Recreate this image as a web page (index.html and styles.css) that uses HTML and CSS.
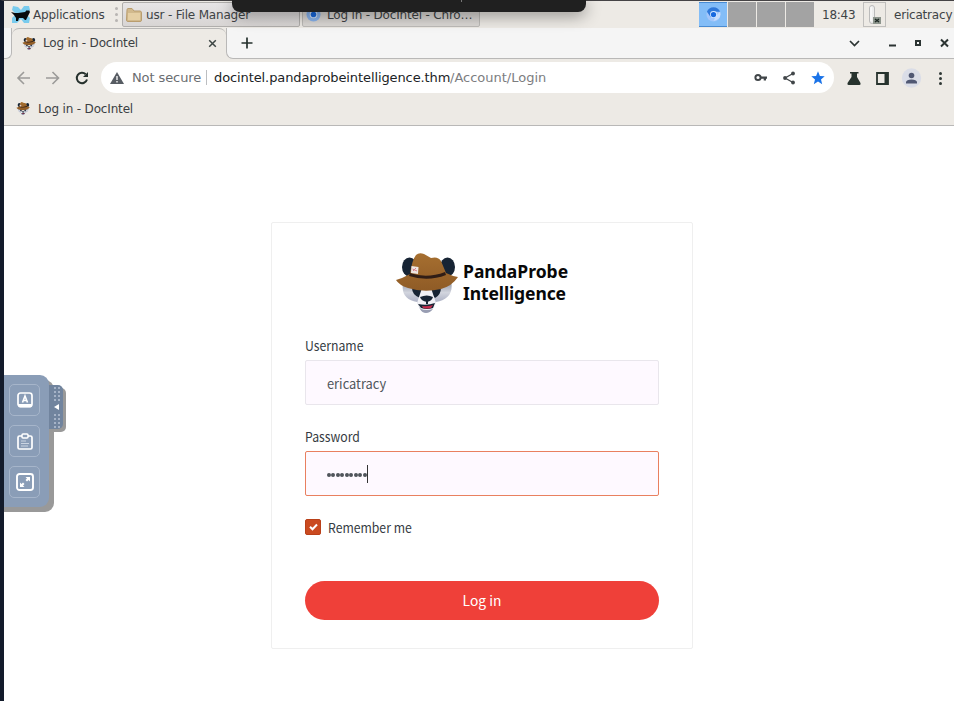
FILE: index.html
```html
<!DOCTYPE html>
<html lang="en">
<head>
<meta charset="utf-8">
<title>Log in - DocIntel</title>
<link rel="stylesheet" href="styles.css">
</head>
<body>
<svg class="defs" width="0" height="0" aria-hidden="true">
  <defs>
    <linearGradient id="face" x1="0" y1="0" x2="0" y2="1"><stop offset="0" stop-color="#858b9c"/><stop offset=".4" stop-color="#d2d5de"/><stop offset=".6" stop-color="#b9bdcd"/><stop offset="1" stop-color="#9095af"/></linearGradient>
    <linearGradient id="felt" x1="0" y1="0" x2="0" y2="1"><stop offset="0" stop-color="#a66f30"/><stop offset="1" stop-color="#8f5b26"/></linearGradient>
    <symbol id="panda" viewBox="0 0 63 60">
      <ellipse cx="14.500" cy="14" rx="7.500" ry="9.500" fill="#172434"/>
      <ellipse cx="52.500" cy="14" rx="7.500" ry="9.500" fill="#172434"/>
      <path d="M8 29C6 42 12 47 22 49L25 56Q31 61 37 56L41 49C52 47 59 41 56 27Z" fill="url(#face)"/>
      <path d="M17 35L28 34Q29 42 25 45Q17 42 17 35ZM36 34L46 34Q46 42 40 45Q36 42 36 34Z" fill="#172434"/>
      <path d="M27 35H36L41 50Q39 58 32 58Q25 58 22 50Z" fill="#f1f1f6"/>
      <path d="M25 44Q32 41 38 44Q37 48 32 49Q26 48 25 44ZM31 48H33V51H31ZM23 51Q32 53 40 50L38 55Q32 57 26 55Z" fill="#172434"/>
      <path d="M27 53Q32 54 38 52L36 55Q32 56 28 55Z" fill="#c72b4d"/>
      <path d="M25 56Q32 58 38 56Q35 60 31 60Q27 60 25 56Z" fill="#989db2"/>
      <path d="M1 27Q8 25 15 21Q17 7 21 2Q24 -1 29 1L36 5Q43 3 46 8L51 20Q57 23 63 24Q57 33 46 36Q29 40 13 35Q4 32 1 27Z" fill="url(#felt)"/>
      <path d="M15 20Q32 26 50 19L51 22Q33 29 14 23Z" fill="#301d16"/>
      <path d="M16.500 13L23.500 14L23 21L16 20Z" fill="#eee6e3"/><path d="M17.500 16L22 18M18 18L21 15" stroke="#d9828b" stroke-width="1"/>
    </symbol>
  </defs>
</svg>
<div class="desktop">
  <header class="taskbar">
    <svg class="mouse" width="20" height="18" viewBox="0 0 20 18"><path d="M2 0L7 1L10 4L13 0L18 0L19 4L15 8L19 12L18 17L13 17L10 13L6 17L1 17L1 12L5 8L1 4Z" fill="#79cbed"/><path d="M0 6L4 7L7 7L14 6L16 4L17 5L18 4L19 6L17 10L16 12L15 14L14 14L12 12L8 12L7 15L5 15L5 12L3 9Z" fill="#080a0c"/></svg>
    <span class="apps">Applications</span>
    <span class="grip"><i></i><i></i><i></i></span>
    <div class="task active"><svg width="16" height="14" viewBox="0 0 16 14"><path d="M1 2Q1 .5 2 .5H6L8 3H14Q15.500 3 15.500 5V12Q15.500 13.500 14 13.500H2Q.5 13.500 .5 12Z" fill="#d1b98d" stroke="#b99d6e"/><path d="M2 5H14V12H2Z" fill="#e5cfa4"/></svg><span>usr - File Manager</span></div>
    <div class="task"><svg width="15" height="15" viewBox="0 0 16 16"><circle cx="8" cy="8" r="7.500" fill="#8ab5ef"/><path d="M1 5A7.500 7.500 0 0 1 15 5H8Z" fill="#3878ca"/><circle cx="8" cy="8" r="4" fill="#dfeeff"/><circle cx="8" cy="8" r="3" fill="#1768df"/></svg><span>Log in - DocIntel - Chro…</span></div>
    <div class="pager"><b><svg width="15" height="15" viewBox="0 0 16 16"><circle cx="8" cy="8" r="7.500" fill="#a3c6fa"/><path d="M1 5A7.500 7.500 0 0 1 15 5H8L5 11Z" fill="#3079da"/><path d="M8 15L11 9L15 5Q17 13 8 15Z" fill="#c6dcfc"/><circle cx="8" cy="8" r="3.700" fill="#d7e9ff"/><circle cx="8" cy="8" r="2.800" fill="#1768df"/></svg></b><i></i><i></i><i></i></div>
    <span class="clock">18:43</span>
    <span class="tray"><svg width="17" height="21" viewBox="0 0 17 21"><rect x="3.500" y="1.500" width="5" height="18" rx="2.500" fill="#eee" stroke="#bbb"/><path d="M5 3V17" stroke="#fff"/><rect x="7" y="13" width="8" height="7" fill="#8d958d"/><path d="M9 15L13 18M13 15L9 18" stroke="#1e2a25" stroke-width="1.500"/></svg></span>
    <span class="user">ericatracy</span>
  </header>

  <div class="tabs">
    <div class="lead"></div>
    <div class="tab"><svg width="14" height="13"><use href="#panda"/></svg><span>Log in - DocIntel</span><svg class="close" width="9" height="9" viewBox="0 0 9 9"><path d="M1.200 1.200L7.800 7.800M7.800 1.200L1.200 7.800" stroke="#3c4543" stroke-width="1.500"/></svg></div>
    <div class="strip">
      <svg width="12" height="12" viewBox="0 0 12 12"><path d="M6 .5V11.500M.5 6H11.500" stroke="#25312d" stroke-width="1.700"/></svg>
      <svg class="win" width="102" height="12" viewBox="0 0 102 12"><g fill="none" stroke="#2b3332" stroke-width="2"><path d="M2 4L6.500 8.500L11 4" stroke-width="1.700"/><path d="M41 8.500H48"/><rect x="68" y="4" width="4" height="4"/><path d="M93 2.500L100 9.500M100 2.500L93 9.500"/></g></svg>
    </div>
  </div>

  <div class="toolbar">
    <svg class="nav" width="78" height="16" viewBox="0 0 78 16" fill="none" stroke-width="1.600"><g stroke="#9c9b99"><path d="M14 8H2M8 2L2 8L8 14"/><path d="M30 8H42.500M36.500 2L42.500 8L36.500 14"/></g><path d="M69.700 4.300A5.200 5.200 0 1 0 71 9.500" stroke="#26312d" stroke-width="2"/><path d="M72 2V7H67Z" fill="#26312d"/></svg>
    <div class="omnibox">
      <svg width="14" height="12" viewBox="0 0 14 12"><path d="M7 0L14 12H0Z" fill="#575c63"/><path d="M7 4V8M7 9V10.500" stroke="#fff" stroke-width="1.300"/></svg>
      <span class="secure">Not secure</span><i class="rule"></i><span class="host">docintel.pandaprobeintelligence.thm</span><span class="path">/Account/Login</span>
      <svg class="actions" width="72" height="16" viewBox="0 0 72 16"><circle cx="4" cy="7.500" r="2.600" fill="none" stroke="#414649" stroke-width="2"/><path d="M7 6.500H13V8.700H12V10.500H9.700V8.700H7Z" fill="#414649"/><path d="M39 3.500L31 8L39 12.500" fill="none" stroke="#414649" stroke-width="1.300"/><g fill="#414649"><circle cx="39" cy="3.500" r="1.900"/><circle cx="31" cy="8" r="1.900"/><circle cx="39" cy="12.500" r="1.900"/></g><path d="M64 1.200L65.900 5.900L70.700 6.200L67 9.400L68.200 14.200L64 11.500L59.800 14.200L61 9.400L57.300 6.200L62.100 5.900Z" fill="#1a73e8"/></svg>
    </div>
    <svg class="tools" width="100" height="20" viewBox="0 0 100 20"><path d="M3 4H11.500V5.500H10V9L13.500 15Q14 17 12.500 17H1.500Q0 17 .5 15L4.500 9V5.500H3Z" fill="#27332e"/><path d="M30 5H41V16H30Z" fill="none" stroke="#27332e" stroke-width="1.800"/><path d="M37.500 5H41V16H37.500Z" fill="#27332e"/><circle cx="64.500" cy="10" r="9.700" fill="#dadde7"/><circle cx="64.500" cy="7.500" r="2.800" fill="#505873"/><path d="M59 15.500V14Q59.500 11.500 64.500 11.500Q69.500 11.500 70 14V15.500Z" fill="#505873"/><g fill="#303936"><circle cx="93.500" cy="5.500" r="1.500"/><circle cx="93.500" cy="10.500" r="1.500"/><circle cx="93.500" cy="15.500" r="1.500"/></g></svg>
  </div>

  <div class="bookmarks"><svg width="14" height="13"><use href="#panda"/></svg><span>Log in - DocIntel</span></div>

  <main class="page">
    <form class="card">
      <div class="brand"><svg width="63" height="60"><use href="#panda"/></svg><div class="name"><span>PandaProbe</span><span class="second">Intelligence</span></div></div>
      <label><span class="narrow">Username</span></label>
      <div class="field"><span class="value">ericatracy</span></div>
      <label class="pass"><span class="narrow">Password</span></label>
      <div class="field focus"><span class="dots"><i></i><i></i><i></i><i></i><i></i><i></i><i></i><i></i><i></i></span><span class="caret"></span></div>
      <div class="remember"><span class="check"><svg width="9" height="8" viewBox="0 0 9 8"><path d="M1 3.700L3.500 6.200L8 1.500" fill="none" stroke="#fff" stroke-width="2"/></svg></span><span class="narrow">Remember me</span></div>
      <div class="submit"><span>Log in</span></div>
    </form>
  </main>
</div>
<div class="viewer-bar"></div>
<aside class="drawer">
  <div class="panel">
    <span><svg width="16" height="16" viewBox="0 0 16 16"><rect x="1" y="1" width="14" height="13.500" rx="2.500" fill="none" stroke="#fff" stroke-width="1.700"/><path d="M1 12H15V13Q15 15.500 13 15.500H3Q1 15.500 1 13Z" fill="#fff"/><path d="M5.500 10.500L8 4L10.500 10.500M6.300 8.500H9.700" fill="none" stroke="#fff" stroke-width="1.600"/></svg></span>
    <span><svg width="16" height="17" viewBox="0 0 16 17"><rect x="1" y="3" width="14" height="13" rx="1.500" fill="none" stroke="#fff" stroke-width="1.700"/><rect x="5" y="1" width="6" height="4" rx="1" fill="#8a9db7" stroke="#fff" stroke-width="1.500"/><path d="M4 8H9M4 10.500H12M4 13H11" stroke="#cbd5e2"/></svg></span>
    <span><svg width="18" height="18" viewBox="0 0 18 18"><rect x="1" y="1" width="16" height="16" rx="2.500" fill="none" stroke="#fff" stroke-width="1.900"/><path d="M9.500 4H14V8.500L12.500 7L11 8.500L9.500 7L11 5.500ZM4 9.500L5.500 11L7 9.500L8.500 11L7 12.500L8.500 14H4Z" fill="#fff"/></svg></span>
  </div>
  <div class="handle"><i></i><svg width="5" height="6" viewBox="0 0 5 6"><path d="M5 0V6L0 3Z" fill="#fff"/></svg><i></i></div>
</aside>
</body>
</html>
```
FILE: styles.css
```css
* { box-sizing: border-box; }
body { margin: 0; width: 954px; height: 701px; overflow: hidden; background: #fff; font-family: "DejaVu Sans", sans-serif; }
svg { display: block; flex: none; }
span, i, b { flex: none; }
.defs { position: absolute; }
.desktop { height: 701px; border-left: 4px solid #131b2b; border-top: 1px solid #454345; display: flex; flex-direction: column; }
.taskbar { height: 27px; flex: none; display: flex; align-items: center; background: #edeae5; font-size: 12px; line-height: 14px; color: #3e4345; white-space: nowrap; }
.mouse { margin-left: 7px; }
.apps { width: 82px; margin-left: 2px; letter-spacing: -.15px; }
.grip { width: 3px; display: grid; gap: 3px; }
.grip i { width: 3px; height: 3px; border-radius: 50%; background: #b8b5b2; }
.task { width: 178px; height: 25px; margin-left: 2px; display: flex; align-items: center; gap: 6px; padding-left: 3px; background: #dbd8d5; border: 1px solid #bdbbb8; border-radius: 2px; overflow: hidden; letter-spacing: -.18px; }
.task.active { margin-left: 4px; background: linear-gradient(#e7e5e6, #d8d5d4); border-color: #b0aeac; gap: 4px; }
.pager { display: flex; gap: 1px; margin-left: 219px; }
.pager b, .pager i { width: 28px; height: 25px; background: #a3a3a3; }
.pager b { display: flex; justify-content: center; align-items: center; background: #83bdf7; border-top: 1px solid #498bd2; border-bottom: 1px solid #498bd2; }
.clock { width: 41px; margin-left: 8px; letter-spacing: -.25px; }
.tray { width: 23px; height: 25px; border: 1px solid #c0bfbd; padding: 1px 2px; }
.user { margin-left: 8px; letter-spacing: -.2px; }
.tabs { height: 31px; flex: none; display: flex; background: #edeae5; color: #3c4144; font-size: 12px; }
.lead { width: 8px; height: 31px; border-bottom: 1px solid #b9b8b7; border-right: 1px solid #b9b8b7; border-bottom-right-radius: 6px; background: #f5f5f5; }
.tab { width: 214px; background: #edeae5; border-top: 1px solid #b9b8b7; border-radius: 7px 7px 0 0; padding: 0 0 2px 10px; display: flex; align-items: center; white-space: nowrap; }
.tab span { width: 165px; margin-left: 7px; letter-spacing: -.17px; }
.strip { flex: 1; border-left: 1px solid #b9b8b7; border-bottom: 1px solid #b9b8b7; border-bottom-left-radius: 7px; display: flex; align-items: center; padding: 0 0 1px 14px; background: #f5f5f5; }
.win { margin-left: 595px; }
.toolbar { height: 37px; flex: none; display: flex; align-items: center; background: #edeae5; }
.nav { margin-left: 12px; }
.omnibox { width: 733px; height: 31px; margin-left: 7px; border-radius: 16px; background: #fff; display: flex; align-items: center; padding-left: 9px; font-size: 13px; white-space: nowrap; }
.secure { width: 74px; margin-left: 8px; color: #6a6d71; letter-spacing: -.1px; }
.rule { width: 1px; height: 15px; background: #bcbec1; }
.host { width: 236px; margin-left: 7px; color: #202325; letter-spacing: -.1px; }
.path { width: 97px; color: #7c7d7f; }
.actions { margin-left: 207px; }
.tools { margin-left: 13px; }
.bookmarks { height: 30px; flex: none; display: flex; align-items: center; padding: 0 0 4px 12px; gap: 8px; border-bottom: 1px solid #b9b8b7; background: #edeae5; color: #3c4144; font-size: 12px; letter-spacing: -.17px; }
.bookmarks span { padding-top: 1px; }
.page { flex: 1; padding: 96px 0 0 267px; }
.card { width: 422px; height: 427px; border: 1px solid #efefef; border-radius: 2px; padding: 30px 33px; background: #fff; color: #353b42; font: 13.4px/20px "Noto Sans CJK SC", sans-serif; }
.brand { display: flex; height: 61px; margin-left: 90px; gap: 5px; }
.name { display: flex; flex-direction: column; padding-top: 7px; color: #080808; font: 700 18px/22px "Noto Sans", sans-serif; transform: scaleX(.973); transform-origin: left; }
.second { letter-spacing: -.12px; }
label { display: block; height: 25px; margin-top: 21px; line-height: 20px; }
.narrow { display: inline-block; transform: scaleX(.913); transform-origin: left; }
.value { display: inline-block; transform: scaleX(.96); transform-origin: left; }
.field { width: 354px; height: 45px; display: flex; align-items: center; padding-left: 21px; border: 1px solid #e9e6ec; border-radius: 2px; background: #fef9ff; color: #50555b; }
.field.focus { border-color: #e98060; }
.dots { display: flex; gap: .6px; padding-top: 3px; }
.dots i { width: 3.9px; height: 4px; border-radius: 50%; background: #50555b; }
.caret { width: 1px; height: 18px; background: #333; }
.remember { height: 20px; margin-top: 21px; display: flex; align-items: center; gap: 7px; }
.check { width: 16px; height: 16px; background: #ca4a20; border: 1px solid #b94019; border-radius: 2px; display: grid; place-items: center; }
.submit { height: 39px; margin-top: 44px; padding-bottom: 2px; border-radius: 20px; background: #ef4039; color: #fff; display: grid; place-items: center; font-size: 13.8px; }
.viewer-bar { position: absolute; left: 232px; top: 0; width: 354px; height: 12px; border-radius: 0 0 8px 8px; background: #202020; box-shadow: 0 3px 16px rgba(0,0,0,.45); }
.viewer-bar::after { content: ""; display: block; width: 1px; height: 2px; margin-left: 229px; background: #777; }
.drawer { position: absolute; left: 4px; top: 375px; display: flex; align-items: flex-start; }
.panel { width: 45px; height: 132px; padding: 9px 0 0 5px; display: grid; align-content: start; gap: 9px; background: #8a9db7; border-radius: 0 9px 9px 0; box-shadow: 5px 5px 0 #999, 0 5px 0 #999; }
.panel span { width: 31px; height: 32px; border: 1px solid #a6b5ca; border-radius: 5px; display: grid; place-items: center; }
.handle { width: 14px; height: 44px; margin-top: 10px; border-radius: 0 5px 5px 0; background: #71849e; box-shadow: 3px 3px 0 #999; display: flex; flex-direction: column; align-items: center; justify-content: center; gap: 3px; }
.handle i { width: 7px; height: 15px; background: radial-gradient(circle, #a6b3c7 0 .8px, transparent 1px) 0 0 / 4px 4px; }
```
